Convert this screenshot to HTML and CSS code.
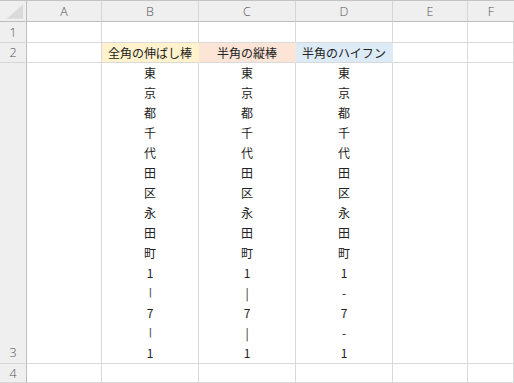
FILE: index.html
```html
<!DOCTYPE html>
<html lang="ja">
<head>
<meta charset="utf-8">
<link rel="stylesheet" href="styles.css">
</head>
<body>
<div class="sheet">
  <div class="corner"><svg width="27" height="21" viewBox="0 0 27 21"><polygon points="24,3 24,18 7,18" fill="#dadada"/></svg></div>
  <div class="colhead">A</div>
  <div class="colhead">B</div>
  <div class="colhead">C</div>
  <div class="colhead">D</div>
  <div class="colhead">E</div>
  <div class="colhead last">F</div>

  <div class="rowhead">1</div>
  <div class="cell"></div>
  <div class="cell"></div>
  <div class="cell"></div>
  <div class="cell"></div>
  <div class="cell"></div>
  <div class="cell"></div>

  <div class="rowhead">2</div>
  <div class="cell"></div>
  <div class="cell fill-yellow">全角の伸ばし棒</div>
  <div class="cell fill-orange">半角の縦棒</div>
  <div class="cell fill-blue">半角のハイフン</div>
  <div class="cell"></div>
  <div class="cell"></div>

  <div class="rowhead bottom">3</div>
  <div class="cell"></div>
  <div class="cell">
    <div class="stack">
      <span>東</span><span>京</span><span>都</span><span>千</span><span>代</span><span>田</span><span>区</span><span>永</span><span>田</span><span>町</span><span>1</span><span><span class="vert">ー</span></span><span>7</span><span><span class="vert">ー</span></span><span>1</span>
    </div>
  </div>
  <div class="cell">
    <div class="stack">
      <span>東</span><span>京</span><span>都</span><span>千</span><span>代</span><span>田</span><span>区</span><span>永</span><span>田</span><span>町</span><span>1</span><span>|</span><span>7</span><span>|</span><span>1</span>
    </div>
  </div>
  <div class="cell">
    <div class="stack">
      <span>東</span><span>京</span><span>都</span><span>千</span><span>代</span><span>田</span><span>区</span><span>永</span><span>田</span><span>町</span><span>1</span><span>-</span><span>7</span><span>-</span><span>1</span>
    </div>
  </div>
  <div class="cell"></div>
  <div class="cell"></div>

  <div class="rowhead">4</div>
  <div class="cell"></div>
  <div class="cell"></div>
  <div class="cell"></div>
  <div class="cell"></div>
  <div class="cell"></div>
  <div class="cell"></div>
</div>
</body>
</html>
```

FILE: styles.css
```css
html, body {
  margin: 0;
  padding: 0;
  background: #ffffff;
  overflow: hidden;
}

.sheet {
  display: grid;
  grid-template-columns: 27px 75px 97px 97px 97px 75px 1fr;
  grid-template-rows: 21px 21px 20px 301px 1fr;
  width: 514px;
  height: 383px;
  font-family: "Noto Sans CJK JP", "Noto Sans", sans-serif;
  font-size: 12px;
  color: #222222;
  border-top: 1px solid #c4c4c4;
  box-sizing: border-box;
}

.corner {
  background: #efefef;
  border-right: 1px solid #bdbdbd;
  border-bottom: 1px solid #bdbdbd;
  box-sizing: border-box;
  display: flex;
}

.colhead {
  background: #efefef;
  border-right: 1px solid #d6d6d6;
  border-bottom: 1px solid #bdbdbd;
  box-sizing: border-box;
  display: flex;
  align-items: center;
  justify-content: center;
  color: #555555;
  font-family: "Open Sans", "Noto Sans", sans-serif;
  font-size: 12.5px;
  font-weight: 300;
}

.colhead.last {
  border-right: none;
}

.rowhead {
  background: #efefef;
  border-right: 1px solid #bdbdbd;
  border-bottom: 1px solid #d6d6d6;
  box-sizing: border-box;
  display: flex;
  align-items: center;
  justify-content: center;
  color: #555555;
  font-family: "Open Sans", "Noto Sans", sans-serif;
  font-size: 12.5px;
  font-weight: 300;
}

.rowhead.bottom {
  align-items: flex-end;
  padding-bottom: 2px;
}

.cell {
  border-right: 1px solid #d9d9d9;
  border-bottom: 1px solid #d9d9d9;
  box-sizing: border-box;
  display: flex;
  align-items: center;
  justify-content: center;
  white-space: nowrap;
  line-height: 20px;
}

.fill-yellow {
  background: #fff2cc;
  border-right-color: #fff2cc;
}

.fill-orange {
  background: #fce4d6;
  border-right-color: #fce4d6;
}

.fill-blue {
  background: #ddebf7;
  border-right-color: #ddebf7;
}

.stack {
  display: flex;
  flex-direction: column;
  align-items: center;
  width: 100%;
}

.stack > span {
  display: block;
  height: 20px;
  line-height: 20px;
  text-align: center;
}

.vert {
  display: inline-block;
  writing-mode: vertical-rl;
  height: 20px;
  line-height: 12px;
  color: #555555;
}
```
